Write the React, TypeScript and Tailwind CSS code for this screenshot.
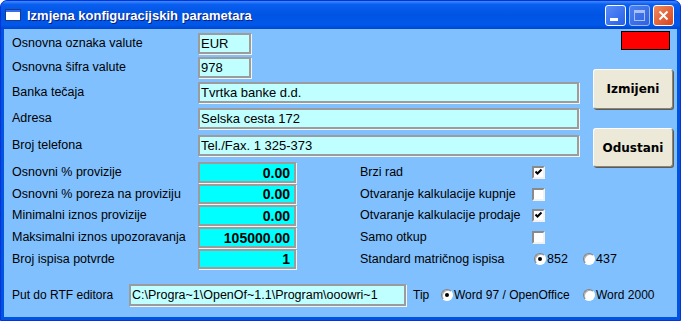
import React from "react";

const sans = "font-['Liberation_Sans',Arial,sans-serif]";

function Field({ w, value, num }: { w: string; value: string; num?: boolean }) {
  return (
    <div
      className={`${w} h-full shrink-0 border-2 border-[#9c9c9c] shadow-[1px_1px_0_#f4f4f4] flex items-center ${
        num ? "bg-[#00ffff] justify-end pr-[4px] font-bold text-[14px]" : "bg-[#c0ffff] pl-[1px] text-[13px]"
      }`}
    >
      <span className="leading-none text-black whitespace-nowrap">{value}</span>
    </div>
  );
}

function Check({ on }: { on?: boolean }) {
  return (
    <div className="w-[13px] h-[13px] shrink-0 bg-white border-2 border-t-[#8a8a8a] border-l-[#8a8a8a] border-b-[#f2f2f2] border-r-[#f2f2f2] flex items-center justify-center">
      {on && (
        <svg width="9" height="9" viewBox="0 0 9 9">
          <path d="M1.5 3.5 L3.5 5.5 L7.5 1.5" stroke="#000" strokeWidth="2" fill="none" />
        </svg>
      )}
    </div>
  );
}

function Radio({ on }: { on?: boolean }) {
  return (
    <div className="w-[12px] h-[12px] shrink-0 rounded-full bg-white border border-t-[#808080] border-l-[#808080] border-b-[#ffffff] border-r-[#ffffff] shadow-[inset_1px_1px_0_#b0b0b0] flex items-center justify-center">
      {on && <div className="w-[4px] h-[4px] rounded-full bg-black" />}
    </div>
  );
}

const lbl = "shrink-0 text-[12.5px] leading-none text-black whitespace-nowrap";
const row = "flex items-center shrink-0 [&>*]:shrink-0";

export default function App() {
  return (
    <div className={`w-[681px] h-[321px] ${sans} bg-[#0054e3] rounded-t-[7px] flex flex-col overflow-hidden border border-[#0831d9]`}>
      {/* TITLE BAR */}
      <div className="h-[28px] shrink-0 flex items-center pl-[4px] pr-[6px] bg-[linear-gradient(to_bottom,#3d8ef8_0%,#0a5ef0_12%,#0054e3_50%,#0058ea_85%,#0046d0_100%)]">
        <svg width="16" height="12" viewBox="0 0 16 12" className="shrink-0">
          <rect x="0.5" y="0.5" width="15" height="11" fill="#ffffff" stroke="#1a3a8a" />
          <rect x="1" y="1" width="14" height="2" fill="#3a6ee8" />
        </svg>
        <span className="ml-[6px] text-white font-bold text-[13px] leading-none [text-shadow:1px_1px_0_#0a1e78]">
          Izmjena konfiguracijskih parametara
        </span>
        <div className="ml-auto flex gap-[3px]">
          <div className="w-[21px] h-[21px] rounded-[3px] border border-white bg-[linear-gradient(135deg,#5a8cf8,#2660e8)] flex items-end pl-[4px] pb-[4px]">
            <div className="w-[8px] h-[3px] bg-white" />
          </div>
          <div className="w-[21px] h-[21px] rounded-[3px] border border-[#9cb8f2] bg-[linear-gradient(135deg,#4c80f0,#2f62e0)] flex items-center justify-center">
            <div className="w-[11px] h-[11px] border border-[#a8c0f4] border-t-[3px]" />
          </div>
          <div className="w-[21px] h-[21px] rounded-[3px] border border-white bg-[linear-gradient(135deg,#f08a5c,#d8431e)] flex items-center justify-center">
            <svg width="11" height="11" viewBox="0 0 11 11">
              <path d="M1.5 1.5 L9.5 9.5 M9.5 1.5 L1.5 9.5" stroke="#fff" strokeWidth="2" />
            </svg>
          </div>
        </div>
      </div>

      {/* CLIENT */}
      <div className="flex-1 mx-[3px] mb-[3px] bg-[#80c0ff] flex flex-col">
        <div className="flex">
          <div className="w-[581px] shrink-0 pl-[8px] flex flex-col">
            <div className={`${row} h-[21px] mt-[4px]`}>
              <span className={`${lbl} w-[186px]`}>Osnovna oznaka valute</span>
              <Field w="w-[53px]" value="EUR" />
            </div>
            <div className={`${row} h-[21px] mt-[3px]`}>
              <span className={`${lbl} w-[186px]`}>Osnovna šifra valute</span>
              <Field w="w-[53px]" value="978" />
            </div>
            <div className={`${row} h-[21px] mt-[4px]`}>
              <span className={`${lbl} w-[186px]`}>Banka tečaja</span>
              <Field w="w-[381px]" value="Tvrtka banke d.d." />
            </div>
            <div className={`${row} h-[21px] mt-[5px]`}>
              <span className={`${lbl} w-[186px]`}>Adresa</span>
              <Field w="w-[381px]" value="Selska cesta 172" />
            </div>
            <div className={`${row} h-[21px] mt-[6px]`}>
              <span className={`${lbl} w-[186px]`}>Broj telefona</span>
              <Field w="w-[381px]" value="Tel./Fax. 1 325-373" />
            </div>

            <div className={`${row} h-[21px] mt-[6px]`}>
              <span className={`${lbl} w-[186px]`}>Osnovni % provizije</span>
              <Field w="w-[98px]" value="0.00" num />
              <span className={`${lbl} w-[172px] ml-[64px]`}>Brzi rad</span>
              <Check on />
            </div>
            <div className={`${row} h-[20px] mt-[1px]`}>
              <span className={`${lbl} w-[186px]`}>Osnovni % poreza na proviziju</span>
              <Field w="w-[98px]" value="0.00" num />
              <span className={`${lbl} w-[172px] ml-[64px]`}>Otvaranje kalkulacije kupnje</span>
              <Check />
            </div>
            <div className={`${row} h-[21px] mt-[1px]`}>
              <span className={`${lbl} w-[186px]`}>Minimalni iznos provizije</span>
              <Field w="w-[98px]" value="0.00" num />
              <span className={`${lbl} w-[172px] ml-[64px]`}>Otvaranje kalkulacije prodaje</span>
              <Check on />
            </div>
            <div className={`${row} h-[21px] mt-[1px]`}>
              <span className={`${lbl} w-[186px]`}>Maksimalni iznos upozoravanja</span>
              <Field w="w-[98px]" value="105000.00" num />
              <span className={`${lbl} w-[172px] ml-[64px]`}>Samo otkup</span>
              <Check />
            </div>
            <div className={`${row} h-[20px] mt-[1px]`}>
              <span className={`${lbl} w-[186px]`}>Broj ispisa potvrde</span>
              <Field w="w-[98px]" value="1" num />
              <span className={`${lbl} w-[174px] ml-[64px]`}>Standard matričnog ispisa</span>
              <div className="w-[49px] flex items-center">
                <Radio on />
                <span className="ml-[1px] text-[12.5px] leading-none">852</span>
              </div>
              <div className="flex items-center">
                <Radio />
                <span className="ml-[1px] text-[12.5px] leading-none">437</span>
              </div>
            </div>
          </div>

          {/* BUTTONS */}
          <div className="w-[80px] shrink-0 ml-[8px] flex flex-col">
            <div className="ml-[28px] mt-[2px] w-[49px] h-[19px] bg-[#ff0000] border border-black" />
            <button className="mt-[19px] h-[40px] rounded-[3px] bg-[#ece9d8] border border-t-white border-l-white border-b-[#8a877a] border-r-[#8a877a] shadow-[1px_1px_0_#5c5a52] font-['DejaVu_Sans',sans-serif] font-bold text-[12px] text-black">
              Izmijeni
            </button>
            <button className="mt-[19px] h-[39px] rounded-[3px] bg-[#ece9d8] border border-t-white border-l-white border-b-[#8a877a] border-r-[#8a877a] shadow-[1px_1px_0_#5c5a52] font-['DejaVu_Sans',sans-serif] font-bold text-[12px] text-black">
              Odustani
            </button>
          </div>
        </div>

        {/* RTF ROW */}
        <div className={`${row} h-[22px] mt-[15px] pl-[8px]`}>
          <span className="w-[117px] text-[12px] leading-none whitespace-nowrap">Put do RTF editora</span>
          <div className="w-[277px] h-full bg-[#c0ffff] border-2 border-[#9c9c9c] shadow-[1px_1px_0_#f4f4f4] flex items-center pl-[1px]">
            <span className="text-[12.5px] leading-none whitespace-nowrap">C:\Progra~1\OpenOf~1.1\Program\ooowri~1</span>
          </div>
          <span className="ml-[7px] w-[28px] text-[12px] leading-none">Tip</span>
          <div className="w-[142px] flex items-center">
            <Radio on />
            <span className="ml-[1px] text-[12px] leading-none whitespace-nowrap">Word 97 / OpenOffice</span>
          </div>
          <div className="flex items-center">
            <Radio />
            <span className="ml-[1px] text-[12px] leading-none whitespace-nowrap">Word 2000</span>
          </div>
        </div>
      </div>
    </div>
  );
}
